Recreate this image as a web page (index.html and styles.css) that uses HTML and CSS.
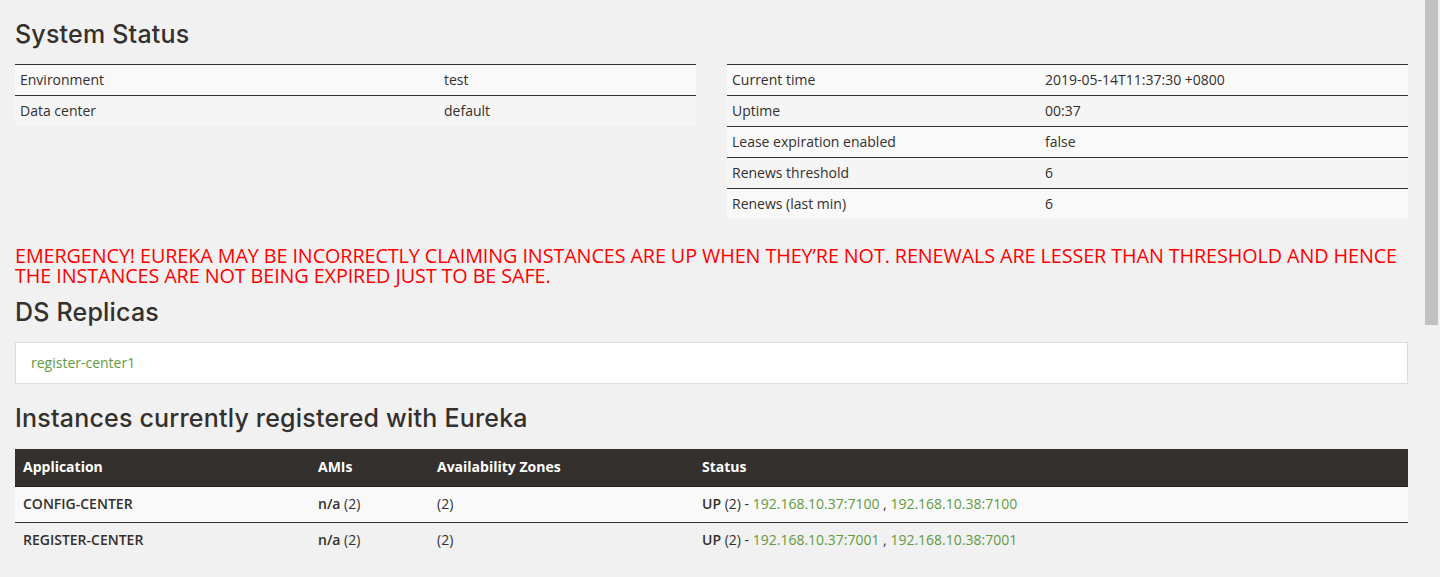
FILE: index.html
```html
<!DOCTYPE html>
<html lang="en">
<head>
<meta charset="UTF-8">
<meta name="viewport" content="width=device-width, initial-scale=1.0">
<title>Eureka</title>
<link rel="stylesheet" href="styles.css">
</head>
<body>
<div class="container">
    <h1 class="section_title">System Status</h1>
    <div class="status_row">
        <div class="status_col">
            <table class="status_table left">
                <tr><td class="key">Environment</td><td>test</td></tr>
                <tr><td class="key">Data center</td><td>default</td></tr>
            </table>
        </div>
        <div class="status_col">
            <table class="status_table right">
                <tr><td class="key">Current time</td><td>2019-05-14T11:37:30 +0800</td></tr>
                <tr><td class="key">Uptime</td><td>00:37</td></tr>
                <tr><td class="key">Lease expiration enabled</td><td>false</td></tr>
                <tr><td class="key">Renews threshold</td><td>6</td></tr>
                <tr><td class="key">Renews (last min)</td><td>6</td></tr>
            </table>
        </div>
    </div>

    <h4 class="emergency">EMERGENCY! EUREKA MAY BE INCORRECTLY CLAIMING INSTANCES ARE UP WHEN THEY’RE NOT. RENEWALS ARE LESSER THAN THRESHOLD AND HENCE<br>THE INSTANCES ARE NOT BEING EXPIRED JUST TO BE SAFE.</h4>

    <h1 class="section_title">DS Replicas</h1>
    <ul class="replicas">
        <li><a href="#">register-center1</a></li>
    </ul>

    <h1 class="section_title">Instances currently registered with Eureka</h1>
    <table class="instances">
        <thead>
            <tr>
                <th class="c_app">Application</th>
                <th class="c_ami">AMIs</th>
                <th class="c_zone">Availability Zones</th>
                <th>Status</th>
            </tr>
        </thead>
        <tbody>
            <tr>
                <td><b>CONFIG-CENTER</b></td>
                <td><b>n/a</b> (2)</td>
                <td>(2)</td>
                <td><b>UP</b> (2) - <a href="#">192.168.10.37:7100</a> , <a href="#">192.168.10.38:7100</a></td>
            </tr>
            <tr>
                <td><b>REGISTER-CENTER</b></td>
                <td><b>n/a</b> (2)</td>
                <td>(2)</td>
                <td><b>UP</b> (2) - <a href="#">192.168.10.37:7001</a> , <a href="#">192.168.10.38:7001</a></td>
            </tr>
        </tbody>
    </table>
</div>

<div class="scrollbar"><div class="thumb"></div></div>
</body>
</html>
```

FILE: styles.css
```css
* {margin: 0; padding: 0; box-sizing: border-box;}
li {list-style: none;}
body {
    background: #f1f1f1;
    color: #34302d;
    font-family: "Open Sans", "Noto Sans", sans-serif;
    font-size: 14px;
    line-height: 20px;
    margin-right: 17px;
}
a {color: #629a3e; text-decoration: none;}
.container {
    padding: 21px 15px 0;
}
.section_title {
    font-family: Inter, "Open Sans", sans-serif;
    font-size: 25px;
    font-weight: 500;
    letter-spacing: 0.2px;
    line-height: 26px;
    color: #34302d;
}
.status_row {
    display: flex;
    gap: 31px;
    margin-top: 17px;
}
.status_col {
    flex: 1;
}
.status_table {
    width: 100%;
    border-collapse: collapse;
    table-layout: fixed;
}
.status_table td {
    border-top: 1px solid #34302d;
    padding: 5px;
    line-height: 20px;
    background: #f5f5f5;
}
.status_table tr:nth-child(odd) td {
    background: #f9f9f9;
}
.status_table.left .key {width: 424px;}
.status_table.right .key {width: 313px;}

.emergency {
    color: #ff0000;
    font-size: 19.8px;
    font-weight: normal;
    line-height: 20px;
    margin-top: 27px;
    letter-spacing: -0.1px;
}
.emergency + .section_title {
    margin-top: 13px;
}
.replicas {
    margin-top: 17px;
    background: #fff;
    border: 1px solid #ddd;
}
.replicas li {
    padding: 10px 15px;
}
.replicas + .section_title {
    margin-top: 21px;
}
.instances {
    width: 100%;
    margin-top: 18px;
    border-collapse: collapse;
    table-layout: fixed;
}
.instances th {
    background: #34302d;
    color: #fff;
    text-align: left;
    font-weight: bold;
    padding: 8px 8px 9px;
    line-height: 20px;
    border-bottom: 1px solid #222;
}
.instances th.c_app {width: 295px;}
.instances th.c_ami {width: 119px;}
.instances th.c_zone {width: 265px;}
.instances td {
    padding: 7px 8px 8px;
    line-height: 20px;
    border-top: 1px solid #34302d;
}
.instances tbody tr:nth-child(odd) td {
    background: #f9f9f9;
}
.instances td b {font-weight: 600;}

.scrollbar {
    position: fixed;
    top: 0;
    right: 0;
    width: 17px;
    height: 100%;
    background: #f1f1f1;
}
.scrollbar .thumb {
    margin: 0 2px;
    height: 325px;
    background: #c1c1c1;
}
```
